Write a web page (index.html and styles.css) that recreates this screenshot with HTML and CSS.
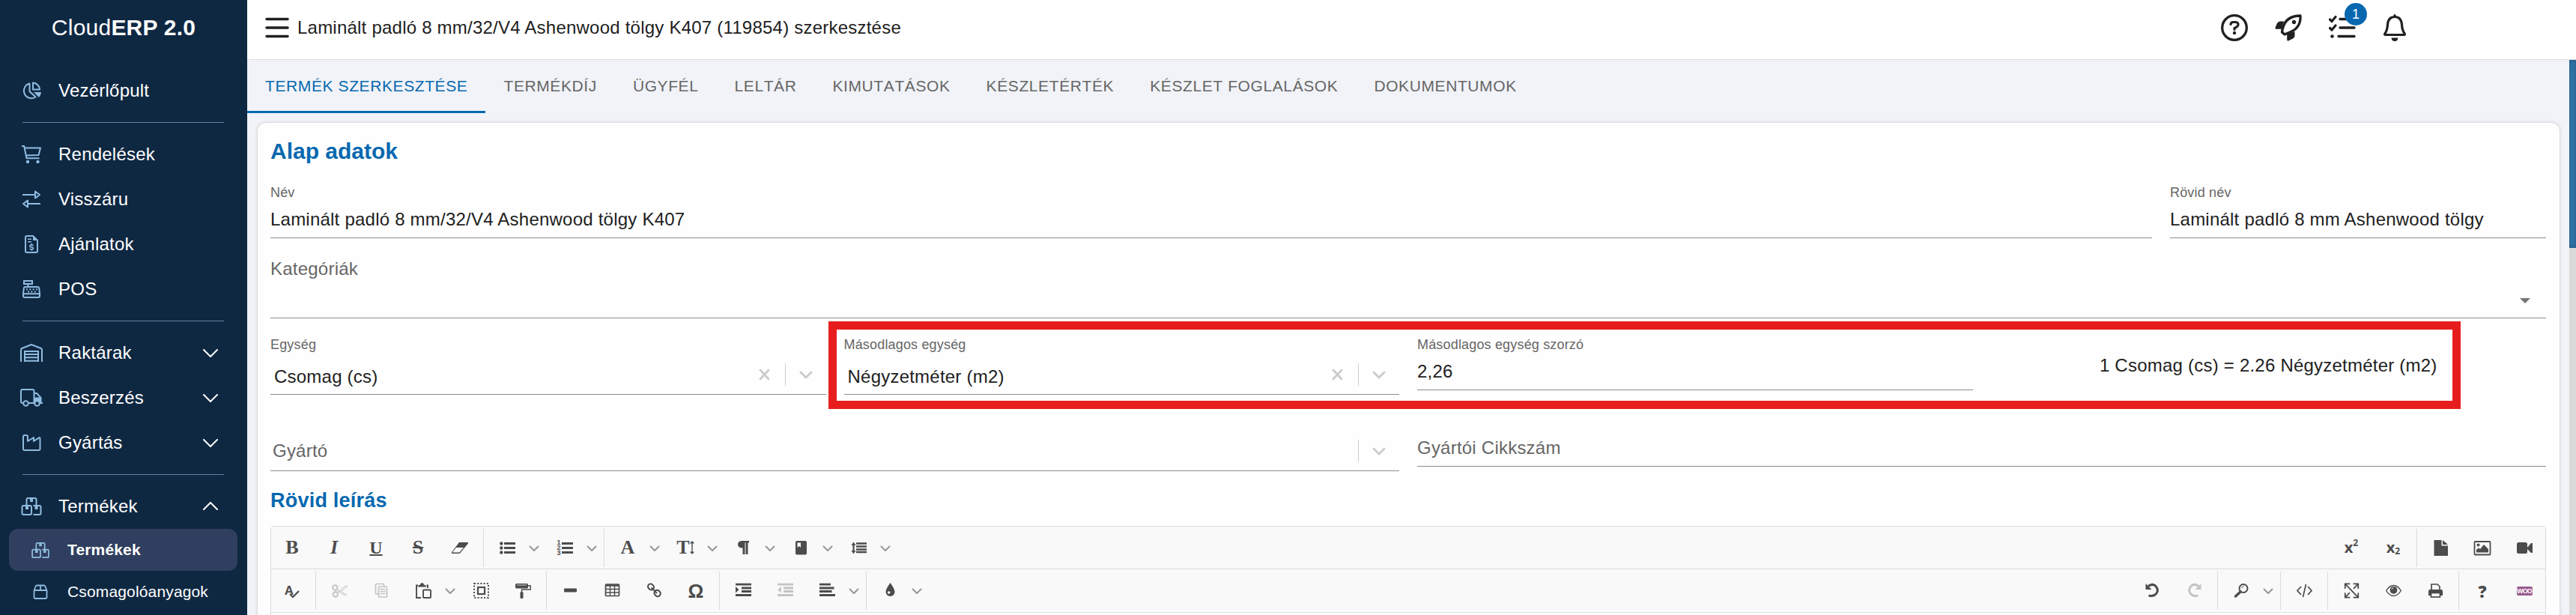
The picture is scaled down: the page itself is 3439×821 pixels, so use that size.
FILE: index.html
```
<!DOCTYPE html>
<html lang="hu">
<head>
    <meta charset="UTF-8">
    <meta name="viewport" content="width=device-width, initial-scale=1.0">
    <title>CloudERP 2.0</title>
    <link rel="stylesheet" href="styles.css">
</head>
<body>
    <!-- Shared icons -->
    <svg class="sprite">
        <symbol id="chevron" viewBox="0 0 20 12"><path d="M1 1l9 9 9-9" fill="none" stroke="currentColor" stroke-width="2" stroke-linecap="round" stroke-linejoin="round"/></symbol>
        <symbol id="small-chevron" viewBox="0 0 14 9"><path d="M1.500 1.500L7 7l5.500-5.500" fill="none" stroke="currentColor" stroke-width="2" stroke-linecap="round" stroke-linejoin="round"/></symbol>
        <symbol id="select-chevron" viewBox="0 0 18 11"><path d="M2 2l7 7 7-7" fill="none" stroke="currentColor" stroke-width="3" stroke-linecap="round" stroke-linejoin="round"/></symbol>
        <symbol id="clear" viewBox="0 0 16 16"><path d="M2.300 1.800l11.400 12.400M13.700 1.800L2.300 14.200" fill="none" stroke="currentColor" stroke-width="3.200" stroke-linecap="round"/></symbol>
        <symbol id="boxes" viewBox="0 0 27 24"><path d="M7 10V3q0-2 2-2h9q2 0 2 2v7M3 11h8.500q2 0 2 2v8q0 2-2 2H3q-2 0-2-2v-8q0-2 2-2zM16 11h8q2 0 2 2v8q0 2-2 2h-8" fill="none" stroke="currentColor" stroke-width="2"/><path d="M11.500 1h4v5h-4zM5.500 11h4v5h-4zM18 11h4v5h-4z" fill="currentColor"/></symbol>
    </svg>

    <aside class="sidebar">
        <div class="brand">Cloud<b>ERP 2.0</b></div>
        <nav>
            <a class="nav-item"><svg class="nav-icon" viewBox="0 0 30 24"><path d="M12.500 2.500A10 10 0 1 0 20.500 20.500L12.500 13z" fill="none" stroke="currentColor" stroke-width="2" stroke-linejoin="round"/><path d="M17 1.500a9.500 9.500 0 0 1 9 9h-9z" fill="none" stroke="currentColor" stroke-width="2" stroke-linejoin="round"/><path d="M18 14h10q-.5 4.500-3 7z" fill="currentColor"/></svg>Vezérlőpult</a>
            <hr>
            <a class="nav-item"><svg class="nav-icon" viewBox="0 0 30 24"><path d="M2 1h3.200l3.300 16.300h17M6 3.500h21l-2.500 9.500-16.500.5" fill="none" stroke="currentColor" stroke-width="2" stroke-linejoin="round"/><circle cx="10" cy="22" r="2.200" fill="currentColor"/><circle cx="23.500" cy="22" r="2.200" fill="currentColor"/></svg>Rendelések</a>
            <a class="nav-item"><svg class="nav-icon" viewBox="0 0 30 24"><path d="M3 6h16M20 1.500l6 4.500-6 4.500zM27 18H11M10 13.500v9L4 18z" fill="none" stroke="currentColor" stroke-width="2" stroke-linejoin="round"/></svg>Visszáru</a>
            <a class="nav-item"><svg class="nav-icon" viewBox="0 0 30 24"><path d="M17 1H9Q7 1 7 3v18q0 2 2 2h12q2 0 2-2V7z" fill="none" stroke="currentColor" stroke-width="2"/><path d="M17 1l6 6h-6zM10 4.500h5v1.500h-5zM10 8h5v1.500h-5z" fill="currentColor"/><path d="M17.500 13.800q-2-1.300-4.200-.3-1.500 1.700 1 2.300 4 .6 2.800 2.500-1.600 1.300-4.300 0M15.300 11v2M15.300 18.500v2" fill="none" stroke="currentColor" stroke-width="1.700"/></svg>Ajánlatok</a>
            <a class="nav-item"><svg class="nav-icon" viewBox="0 0 30 24"><path d="M5 1h11v4H5zM10.500 5v4M7 9h16q2 0 2.200 2L26 18v3q0 2-2 2H6q-2 0-2-2v-3l.8-7Q5 9 7 9zM4 18.200h22" fill="none" stroke="currentColor" stroke-width="2"/><path d="M8 12.200h15M10 15.500h12" stroke="currentColor" stroke-width="2" stroke-dasharray="2 2.300"/></svg>POS</a>
            <hr>
            <a class="nav-item"><svg class="nav-icon" viewBox="0 0 30 24"><path d="M1 24V8q0-1.500 1.300-2L15 1l12.700 5q1.300.5 1.300 2v16M6 24V10h18v14M6 14h18M6 18.300h18M6 22.700h18" fill="none" stroke="currentColor" stroke-width="2"/></svg>Raktárak<svg class="arrow"><use href="#chevron"/></svg></a>
            <a class="nav-item"><svg class="nav-icon" viewBox="0 0 30 24"><path d="M4 19H3q-2 0-2-2V3q0-2 2-2h13.500q2 0 2 2v16M11 19h8M18.500 6H22l5.500 6v7" fill="none" stroke="currentColor" stroke-width="2"/><path d="M18.500 11.500H28V18h2v2h-4l-3.500-4-4 2z" fill="currentColor"/><g fill="#0f2842" stroke="currentColor" stroke-width="2"><circle cx="7.500" cy="19.500" r="3.300"/><circle cx="22.500" cy="19.500" r="3.300"/></g></svg>Beszerzés<svg class="arrow"><use href="#chevron"/></svg></a>
            <a class="nav-item"><svg class="nav-icon" viewBox="0 0 30 24"><path d="M4 4q0-2 2-2h2q2 0 2 2v6l8-5v5l7.500-4.800q1 0 1 1V20q0 2-2 2H6q-2 0-2-2z" fill="none" stroke="currentColor" stroke-width="2" stroke-linejoin="round"/></svg>Gyártás<svg class="arrow"><use href="#chevron"/></svg></a>
            <hr>
            <a class="nav-item"><svg class="nav-icon"><use href="#boxes"/></svg>Termékek<svg class="arrow up"><use href="#chevron"/></svg></a>
            <a class="nav-item sub active"><svg class="nav-icon"><use href="#boxes"/></svg>Termékek</a>
            <a class="nav-item sub"><svg class="nav-icon" viewBox="0 0 24 21"><path d="M3.500 8.500L5.500 3q.5-1.500 2-1.500h9q1.500 0 2 1.500l2 5.500V17q0 2-2 2h-13q-2 0-2-2zM3.500 8h17M12 1.500V8" fill="none" stroke="currentColor" stroke-width="1.800"/></svg>Csomagolóanyagok</a>
        </nav>
    </aside>

    <div class="page">
        <header class="topbar">
            <svg class="menu" viewBox="0 0 32 28"><path d="M2 2.500h28M2 14h28M2 25.500h28" stroke="currentColor" stroke-width="3.500" stroke-linecap="round"/></svg>
            <h1>Laminált padló 8 mm/32/V4 Ashenwood tölgy K407 (119854) szerkesztése</h1>
            <div class="actions">
                <svg viewBox="0 0 36 36"><circle cx="18" cy="18" r="16.300" fill="none" stroke="currentColor" stroke-width="3.300"/><path d="M13 13.500q.3-3 3.500-3h3q3.800.3 3.500 3.700-.2 2.200-5 4.600v1.500" fill="none" stroke="currentColor" stroke-width="3.200" stroke-linecap="round"/><circle cx="18" cy="25" r="2.200" fill="currentColor"/></svg>
                <svg viewBox="0 0 36 36"><path d="M9.500 24Q12 2 34 2q1 16-14 22l-7 3z" fill="none" stroke="currentColor" stroke-width="3.300" stroke-linejoin="round"/><path d="M12 9.500H7Q4.500 9.500 3 12L.5 18q-.5 1.800 1.500 1.800h7zM26.500 23v5.500q0 2.500-2.500 4l-6 3q-1.800.5-1.800-1.500v-8z" fill="currentColor"/><circle cx="25.500" cy="10.500" r="2.700" fill="currentColor"/></svg>
                <div class="tasks">
                    <svg viewBox="0 0 36 36"><path d="M1.500 7l2.500 2.500 5-6M1.500 18.500L4 21l5-6" fill="none" stroke="currentColor" stroke-width="3.200" stroke-linecap="round" stroke-linejoin="round"/><path d="M15 6.500h19M15 18h19M13 29.500h21" stroke="currentColor" stroke-width="3.400" stroke-linecap="round"/><circle cx="4.500" cy="29.500" r="2.300" fill="currentColor"/></svg>
                    <span class="badge">1</span>
                </div>
                <svg class="bell" viewBox="0 0 36 36"><path d="M18 3.500q-8.500 0-9.500 10-.3 8-3.700 12.500-.8 1.500.7 1.500h25q1.500 0 .7-1.500-3.400-4.500-3.700-12.500-1-10-9.500-10z" fill="none" stroke="currentColor" stroke-width="3.200"/><path d="M16.400 3V1.500q0-1.500 1.600-1.500t1.600 1.500V3zM13.500 31.500h9q-.5 4.500-4.500 4.500t-4.500-4.500z" fill="currentColor"/></svg>
            </div>
        </header>

        <main class="content">
            <div class="tabs">
                <a class="tab selected">Termék szerkesztése</a>
                <a class="tab">Termékdíj</a>
                <a class="tab">Ügyfél</a>
                <a class="tab">Leltár</a>
                <a class="tab">Kimutatások</a>
                <a class="tab">Készletérték</a>
                <a class="tab">Készlet foglalások</a>
                <a class="tab">Dokumentumok</a>
            </div>

            <section class="card">
                <h2>Alap adatok</h2>
                <div class="row names">
                    <div class="field"><label>Név</label><div class="value">Laminált padló 8 mm/32/V4 Ashenwood tölgy K407</div></div>
                    <div class="field"><label>Rövid név</label><div class="value">Laminált padló 8 mm Ashenwood tölgy</div></div>
                </div>

                <div class="categories"><span>Kategóriák</span><i class="caret"></i></div>

                <div class="row units">
                    <div class="field">
                        <label>Egység</label>
                        <div class="select">Csomag (cs)<div class="indicators"><svg class="clear"><use href="#clear"/></svg><i></i><svg class="open"><use href="#select-chevron"/></svg></div></div>
                    </div>
                    <div class="field">
                        <label>Másodlagos egység</label>
                        <div class="select">Négyzetméter (m2)<div class="indicators"><svg class="clear"><use href="#clear"/></svg><i></i><svg class="open"><use href="#select-chevron"/></svg></div></div>
                    </div>
                    <div class="field"><label>Másodlagos egység szorzó</label><div class="value">2,26</div></div>
                    <div class="equation">1 Csomag (cs) = 2.26 Négyzetméter (m2)</div>
                    <div class="highlight"></div>
                </div>

                <div class="row maker">
                    <div class="select empty">Gyártó<div class="indicators"><i></i><svg class="open"><use href="#select-chevron"/></svg></div></div>
                    <div class="value empty">Gyártói Cikkszám</div>
                </div>

                <h3>Rövid leírás</h3>
                <div class="editor">
                    <div class="toolbar">
                        <span class="tool glyph">B</span>
                        <span class="tool glyph italic">I</span>
                        <span class="tool glyph underline">U</span>
                        <span class="tool glyph strike">S</span>
                        <span class="tool wide"><svg viewBox="0 0 24 21"><path d="M11 3h11.500q1 .5.500 1.500L13 16.500Q12 18 10.500 18H1.500q-1.300-.5-.5-1.700z" fill="currentColor"/><path d="M7 10h10l-5 5.800q-.7.800-1.500.8H2z" fill="#f9f9f9"/></svg></span>
                        <i class="sep"></i>
                        <span class="tool"><svg viewBox="0 0 21 21"><path d="M6 4.500h15M6 10.500h15M6 16.500h15" stroke="currentColor" stroke-width="3"/><g fill="currentColor"><circle cx="2.300" cy="4.500" r="2.200"/><circle cx="2.300" cy="10.500" r="2.200"/><circle cx="2.300" cy="16.500" r="2.200"/></g></svg></span><svg class="trigger"><use href="#small-chevron"/></svg>
                        <span class="tool numbered"><span>1<br>2<br>3</span><svg viewBox="0 0 15 21"><path d="M0 4.500h15M0 10.500h15M0 16.500h15" stroke="currentColor" stroke-width="3"/></svg></span><svg class="trigger"><use href="#small-chevron"/></svg>
                        <i class="sep"></i>
                        <span class="tool glyph">A</span><svg class="trigger"><use href="#small-chevron"/></svg>
                        <span class="tool glyph size">T<svg viewBox="0 0 6 20"><path d="M3 2v16M.8 4.500L3 2l2.200 2.500M.8 15.500L3 18l2.200-2.500" fill="none" stroke="currentColor" stroke-width="1.400"/></svg></span><svg class="trigger"><use href="#small-chevron"/></svg>
                        <span class="tool"><svg viewBox="0 0 21 21"><path d="M8 1h10v2.500h-1.500V19h-3V3.500h-1V19h-3v-8.500H8Q3 10 3 5.800T8 1z" fill="currentColor"/></svg></span><svg class="trigger"><use href="#small-chevron"/></svg>
                        <span class="tool"><svg viewBox="0 0 21 21"><rect x="3" y="1" width="15" height="18.500" rx="2" fill="currentColor"/><path d="M5.500 3.500h4.500v6.500l-2.200-2-2.300 2z" fill="#f9f9f9"/></svg></span><svg class="trigger"><use href="#small-chevron"/></svg>
                        <span class="tool"><svg viewBox="0 0 21 21"><path d="M7 4.500h14M7 8.500h14M7 12.500h14M7 16h14" stroke="currentColor" stroke-width="2.400"/><path d="M3.500 5v11" stroke="currentColor" stroke-width="2.200"/><path d="M.5 7l3-4.500 3 4.500zM.5 14l3 4.500 3-4.500z" fill="currentColor"/></svg></span><svg class="trigger"><use href="#small-chevron"/></svg>
                        <span class="spacer"></span>
                        <span class="tool script">x<sup>2</sup></span>
                        <span class="tool script">x<sub>2</sub></span>
                        <i class="sep"></i>
                        <span class="tool"><svg viewBox="0 0 21 21"><path d="M1.500 0h10v7.500H20V21H1.500zM13 0l7 6h-7z" fill="currentColor"/></svg></span>
                        <span class="tool wide"><svg viewBox="0 0 24 21"><rect x="1.500" y="2" width="21" height="17.500" rx="1" fill="none" stroke="currentColor" stroke-width="1.800"/><path d="M4 16.500v-3.500l3-2.500 2 1.500 5-6 6 6v4.500z" fill="currentColor"/><circle cx="6.500" cy="6.500" r="2" fill="currentColor"/></svg></span>
                        <span class="tool"><svg viewBox="0 0 21 21"><rect x="0" y="3" width="14" height="15" rx="2.500" fill="currentColor"/><path d="M14 10l5-6h2v13h-2l-5-5z" fill="currentColor"/></svg></span>
                    </div>
                    <div class="toolbar">
                        <span class="tool spell">A<svg viewBox="0 0 14 11"><path d="M1 5l4 4 8-8" fill="none" stroke="currentColor" stroke-width="2.200"/></svg></span>
                        <i class="sep"></i>
                        <span class="tool disabled"><svg viewBox="0 0 21 21"><g fill="none" stroke="currentColor" stroke-width="1.900"><circle cx="4.300" cy="6.500" r="3.200"/><circle cx="4.800" cy="15.500" r="3.200"/></g><path d="M7 8.500L19 15.500q2 1.500-1.500 1.300L7 10.500M8 13.500l9-8.500q3-2 4-.5L13 11" fill="none" stroke="currentColor" stroke-width="1"/></svg></span>
                        <span class="tool disabled"><svg viewBox="0 0 21 21"><g fill="none" stroke="currentColor" stroke-width="1.700"><path d="M6 15H3.500q-1 0-1-1V2.500q0-1 1-1h9q1 0 1 1V5"/><rect x="6.500" y="5" width="11" height="14" rx="1"/><path d="M8.500 8.500h7M8.500 11.500h7M8.500 14.500h7"/></g></svg></span>
                        <span class="tool"><svg viewBox="0 0 21 21"><path d="M3 3.500H1V20h6M14.500 3.500h1.500V7" fill="none" stroke="currentColor" stroke-width="1.900"/><path d="M3 5.500Q3 3 6 2.500 6.500 0 8.500 0T11 2.500q3 .5 3 3z" fill="currentColor"/><rect x="10" y="9.500" width="10" height="10.500" rx="1" fill="none" stroke="currentColor" stroke-width="1.900"/></svg></span><svg class="trigger"><use href="#small-chevron"/></svg>
                        <span class="tool"><svg viewBox="0 0 21 21"><rect x="1" y="1" width="19" height="19" fill="none" stroke="currentColor" stroke-width="2" stroke-dasharray="2 2.200"/><rect x="6" y="6" width="9" height="9" fill="none" stroke="currentColor" stroke-width="2.200"/></svg></span>
                        <span class="tool"><svg viewBox="0 0 21 21"><rect x="0" y="1" width="17" height="6.500" rx="1.500" fill="currentColor"/><path d="M17 4h3.300v5H8.500v4" fill="none" stroke="currentColor" stroke-width="1.400"/><rect x="6.500" y="12" width="4" height="9" rx="1.500" fill="currentColor"/><path d="M2 3h13" stroke="#ccc" stroke-width="1"/></svg></span>
                        <i class="sep"></i>
                        <span class="tool"><svg viewBox="0 0 21 21"><rect x="2" y="7.500" width="17" height="5" rx="1" fill="currentColor"/></svg></span>
                        <span class="tool"><svg viewBox="0 0 21 21"><rect x="1.500" y="2" width="18" height="15.500" rx="1" fill="none" stroke="currentColor" stroke-width="1.700"/><path d="M1.500 3.500h18" stroke="currentColor" stroke-width="2.500"/><path d="M1.500 8.500h18M1.500 13h18M7.500 3v14.500M13.500 3v14.500" stroke="currentColor" stroke-width="1.400"/></svg></span>
                        <span class="tool"><svg viewBox="0 0 21 21"><g fill="none" stroke="currentColor" stroke-width="2"><rect x="1.800" y="2" width="8.500" height="7" rx="3.500" transform="rotate(45 6 5.500)"/><rect x="10.500" y="10.500" width="8.500" height="7.500" rx="3.500" transform="rotate(45 15 14)"/><path d="M6.500 6.500l7.500 7.500"/></g></svg></span>
                        <span class="tool omega">Ω</span>
                        <i class="sep"></i>
                        <span class="tool"><svg viewBox="0 0 21 21"><path d="M0 2.200h21M8 7h13M8 11.500h13M0 16.500h21" stroke="currentColor" stroke-width="2.800"/><path d="M0 5l4.500 4.200L0 13.500z" fill="currentColor"/></svg></span>
                        <span class="tool disabled"><svg viewBox="0 0 21 21"><path d="M0 2.200h21M8 7h13M8 11.500h13M0 16.500h21" stroke="currentColor" stroke-width="2.800"/><path d="M4.800 5L.3 9.200l4.500 4.300z" fill="currentColor"/></svg></span>
                        <span class="tool"><svg viewBox="0 0 21 21"><path d="M0 2.200h15M0 7h19.500M0 11.500h16.500M0 16.500h21" stroke="currentColor" stroke-width="2.800"/></svg></span><svg class="trigger"><use href="#small-chevron"/></svg>
                        <i class="sep"></i>
                        <span class="tool"><svg viewBox="0 0 21 21"><path d="M10.500 0q6 8.500 6 12a6 6 0 0 1-12 0q0-3.500 6-12z" fill="currentColor"/><circle cx="8.700" cy="13" r="1.800" fill="#f9f9f9"/></svg></span><svg class="trigger"><use href="#small-chevron"/></svg>
                        <span class="spacer"></span>
                        <span class="tool"><svg viewBox="0 0 21 21"><path d="M5 4.500q5-4 9.500-.5 5 5 1.500 10-3.500 5-10.500 3" fill="none" stroke="currentColor" stroke-width="3"/><path d="M1.500 1v8h8z" fill="currentColor"/></svg></span>
                        <span class="tool disabled"><svg viewBox="0 0 21 21"><path d="M16 4.500q-5-4-9.500-.5-5 5-1.500 10 3.500 5 10.500 3" fill="none" stroke="currentColor" stroke-width="3"/><path d="M19.500 1v8h-8z" fill="currentColor"/></svg></span>
                        <i class="sep"></i>
                        <span class="tool"><svg viewBox="0 0 21 21"><circle cx="13" cy="7.500" r="5.500" fill="none" stroke="currentColor" stroke-width="2"/><path d="M9 12l-6.500 6" stroke="currentColor" stroke-width="3.500" stroke-linecap="round"/><path d="M10.500 7q.5-2.300 3-2.500" fill="none" stroke="currentColor"/></svg></span><svg class="trigger"><use href="#small-chevron"/></svg>
                        <i class="sep"></i>
                        <span class="tool"><svg viewBox="0 0 21 21"><path d="M6 5l-5 5.500L6 16M15 5l5 5.500-5 5.500M12.500 2l-4 17" fill="none" stroke="currentColor" stroke-width="1.700"/></svg></span>
                        <i class="sep"></i>
                        <span class="tool"><svg viewBox="0 0 24 24"><path d="M2 9V1.500h7.500M14.500 1.500H22V9M2 15v7.500h7.500M22 15v7.500h-7.500M2 1.500L22 22.500M22 1.500l-7 7.500M2 22.500L9 15" fill="none" stroke="currentColor" stroke-width="2"/></svg></span>
                        <span class="tool"><svg viewBox="0 0 21 21"><path d="M.7 10.500q4.300-7 9.800-7t9.800 7q-4.300 7-9.800 7t-9.800-7z" fill="none" stroke="currentColor" stroke-width="1.400"/><circle cx="10.500" cy="9.800" r="4.900" fill="currentColor"/><path d="M8 9q.3-2 2.200-2.200" fill="none" stroke="#f9f9f9"/></svg></span>
                        <span class="tool"><svg viewBox="0 0 21 21"><path d="M5 10V2h8l3 3v5" fill="none" stroke="currentColor" stroke-width="1.700"/><path d="M1 11q0-2 2-2h15q2 0 2 2v6H1z" fill="currentColor"/><rect x="4.500" y="13.500" width="12" height="5.500" fill="#f9f9f9" stroke="currentColor" stroke-width="1.700"/></svg></span>
                        <i class="sep"></i>
                        <span class="tool question">?</span>
                        <span class="tool"><span class="woo">Woo</span></span>
                    </div>
                    <div class="editor-body"></div>
                </div>
            </section>
            <div class="scrollbar"><div class="thumb"></div></div>
        </main>
    </div>
</body>
</html>
```

FILE: styles.css
```
* {
    box-sizing: border-box;
}

body {
    margin: 0;
    height: 821px;
    display: flex;
    overflow: hidden;
    font-family: "Liberation Sans", Arial, sans-serif;
    font-size: 24px;
    line-height: 28px;
    letter-spacing: 0.225px;
    color: #212121;
    background-color: #f1f3f8;
}

svg {
    display: block;
    flex-shrink: 0;
}

.sprite {
    position: absolute;
    width: 0;
    height: 0;
}

/* Sidebar */
.sidebar {
    width: 330px;
    height: 821px;
    flex-shrink: 0;
    background-color: #0f2842;
    color: white;
    overflow: hidden;
}

.brand {
    height: 91px;
    padding-top: 20px;
    font-size: 30px;
    line-height: 34px;
    text-align: center;
}

.sidebar hr {
    height: 1px;
    margin: 12px 31px 12px 30px;
    border: none;
    background-color: #5f819f;
}

.nav-item {
    height: 60px;
    display: flex;
    align-items: center;
    padding: 0 39px 0 27px;
}

.nav-icon {
    width: 30px;
    height: 24px;
    margin-right: 21px;
    color: #8fbbdf;
}

.arrow {
    width: 20px;
    height: 12px;
    margin-left: auto;
    margin-top: 2px;
}

.arrow.up {
    transform: rotate(180deg);
    margin-top: -2px;
}

.nav-item.sub {
    height: 56px;
    margin: 0 13px 0 12px;
    padding: 0 30px;
    border-radius: 12px;
    font-size: 21px;
    letter-spacing: 0.15px;
}

.nav-item.sub .nav-icon {
    width: 24px;
    height: 21px;
    margin-right: 24px;
}

.nav-item.active {
    background-color: #303f5f;
    font-weight: bold;
}

/* Top bar */
.page {
    flex: 1;
    min-width: 0;
}

.topbar {
    height: 80px;
    display: flex;
    align-items: center;
    padding: 0 224px 6px 24px;
    background-color: white;
    border-bottom: 1px solid #ddd;
}

.menu {
    width: 32px;
    height: 28px;
}

h1 {
    margin: 0 0 0 11px;
    font-size: 24px;
    font-weight: normal;
}

.actions {
    display: flex;
    gap: 36px;
    margin-left: auto;
}

.actions svg {
    width: 36px;
    height: 36px;
}

.actions .bell {
    margin-left: -2px;
}

.tasks {
    position: relative;
}

.badge {
    position: absolute;
    top: -15px;
    right: -15px;
    width: 30px;
    height: 30px;
    border-radius: 50%;
    background-color: #0768af;
    color: white;
    font-size: 18px;
    line-height: 30px;
    text-align: center;
}

/* Tabs */
.content {
    position: relative;
    padding: 0 21px 0 13px;
}

.tabs {
    height: 83px;
    display: flex;
    margin-left: -13px;
}

.tab {
    height: 71px;
    padding: 0 24px;
    font-size: 21px;
    line-height: 69px;
    letter-spacing: 0.6px;
    font-kerning: none;
    text-transform: uppercase;
    color: #666;
}

.tab.selected {
    color: #0768af;
    border-bottom: 3px solid #0768af;
}

/* Card */
.card {
    height: 680px;
    padding: 20px 18px 0 17px;
    background-color: #fefefe;
    border: 1px solid #ddd;
    border-radius: 12px;
    box-shadow: 0 0 4px rgba(0, 0, 0, 0.1);
}

h2 {
    margin: 0 0 27px;
    font-size: 30px;
    line-height: 36px;
    letter-spacing: 0;
    color: #0768af;
}

h3 {
    margin: 23px 0 18px;
    font-size: 27px;
    line-height: 32px;
    color: #0768af;
}

.row {
    display: grid;
    gap: 24px;
}

.names {
    grid-template-columns: 1fr 502px;
}

.field label {
    display: block;
    height: 20px;
    font-size: 18px;
    line-height: 20px;
    letter-spacing: 0.17px;
    color: #666;
}

.value {
    height: 51px;
    padding-top: 12px;
    border-bottom: 1px solid #8d8d8d;
}

.select {
    height: 57px;
    display: flex;
    padding: 19px 0 0 5px;
    border-bottom: 1px solid #8d8d8d;
}

.indicators {
    height: 30px;
    display: flex;
    align-items: center;
    margin: -4px 18px 0 auto;
    color: #ccc;
}

.indicators i {
    width: 1px;
    height: 30px;
    margin: 0 18px 0 20px;
    background-color: #ccc;
}

.indicators .clear {
    width: 15px;
    height: 16px;
}

.indicators .open {
    width: 18px;
    height: 11px;
}

.categories {
    height: 80px;
    margin-top: 27px;
    display: flex;
    justify-content: space-between;
    color: #666;
    border-bottom: 1px solid #8d8d8d;
}

.caret {
    margin: 53px 21px 0 0;
    width: 14px;
    height: 7px;
    background-color: #757575;
    clip-path: polygon(0 0, 100% 0, 50% 100%);
}

.units {
    position: relative;
    height: 77px;
    margin-top: 25px;
    grid-template-columns: repeat(4, 1fr);
}

.equation {
    padding-top: 24px;
    text-align: center;
}

/* Red frame over the secondary unit fields */
.highlight {
    position: absolute;
    left: 745px;
    top: -21px;
    width: 2179px;
    height: 117px;
    border: 11px solid #e71d1d;
}

.maker {
    height: 102px;
    grid-template-columns: 1507px 1fr;
    align-items: start;
}

.empty {
    color: #666;
}

.select.empty {
    margin-top: 45px;
    padding: 16px 0 0 3px;
}

.select.empty .indicators {
    margin-top: -1px;
}

.value.empty {
    margin-top: 45px;
    padding-top: 12px;
}

/* Editor */
.editor {
    border: 1px solid #dadada;
    border-radius: 5px 5px 0 0;
    overflow: hidden;
}

.toolbar {
    height: 57px;
    display: flex;
    align-items: center;
    background-color: #f9f9f9;
    border-bottom: 1px solid #dadada;
    color: #4c4c4c;
    letter-spacing: 0;
}

.toolbar + .toolbar {
    height: 58px;
    box-shadow: inset 0 -2px white;
}

.tool {
    width: 56px;
    height: 56px;
    display: flex;
    align-items: center;
    justify-content: center;
    flex-shrink: 0;
}

.tool svg {
    width: 21px;
    height: 21px;
}

.wide svg {
    width: 24px;
}

.disabled {
    color: #c4c4c4;
}

.trigger {
    width: 14px;
    height: 9px;
    margin: 2px 6px 0 1px;
    color: #979797;
}

.sep {
    width: 1px;
    height: 51px;
    margin: 0 3px;
    background-color: #dadada;
}

.spacer {
    flex: 1;
}

.glyph {
    font-family: "Liberation Serif", serif;
    font-weight: bold;
    font-size: 26px;
}

.italic {
    font-style: italic;
}

.underline {
    font-size: 24px;
    text-decoration: underline;
    text-decoration-thickness: 2px;
}

.strike {
    text-decoration: line-through;
    text-decoration-thickness: 2px;
}

.size svg {
    width: 6px;
    height: 20px;
}

.numbered span {
    width: 6px;
    font-size: 9px;
    line-height: 7px;
    font-weight: bold;
}

.numbered svg {
    width: 15px;
}

.script {
    font-family: "Open Sans", sans-serif;
    font-weight: bold;
    font-size: 20px;
}

.script sup,
.script sub {
    font-size: 12px;
    line-height: 12px;
}

.script sup {
    margin-top: -12px;
}

.script sub {
    margin-top: 10px;
}

.spell {
    font-size: 17px;
    font-weight: bold;
}

.spell svg {
    width: 14px;
    height: 11px;
    margin: 10px 0 0 -6px;
}

.omega {
    font-size: 26px;
    font-weight: bold;
}

.question {
    font-family: "Open Sans", sans-serif;
    font-size: 22px;
    font-weight: 800;
}

.woo {
    width: 21px;
    height: 12px;
    border-radius: 2px;
    background-color: #9b5c8f;
    color: white;
    font-size: 9px;
    font-weight: bold;
    line-height: 12px;
    text-align: center;
    text-transform: uppercase;
    letter-spacing: -0.8px;
}

.editor-body {
    height: 40px;
}

/* Page scrollbar */
.scrollbar {
    position: absolute;
    top: 0;
    right: 0;
    width: 9px;
    height: 741px;
    background-color: #d9d9d9;
}

.thumb {
    height: 251px;
    background-color: #3079ae;
    box-shadow: inset 0 0 6px rgba(0, 0, 0, 0.3);
}
```
